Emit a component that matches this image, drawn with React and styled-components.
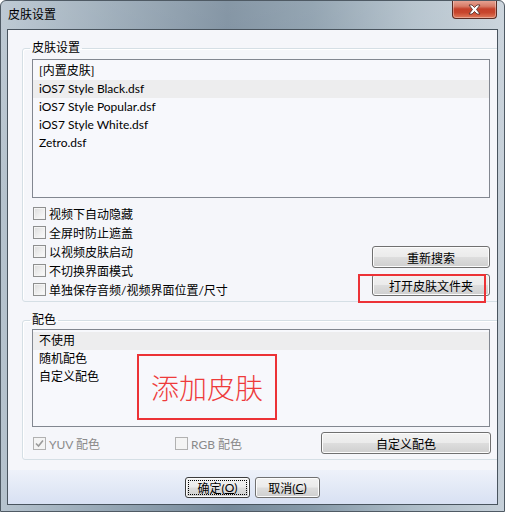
import React from 'react';
import styled, { createGlobalStyle } from 'styled-components';

const GlobalStyle = createGlobalStyle`
  html, body {
    margin: 0;
    padding: 0;
  }
  body {
    font-family: "Lato", "Noto Sans CJK SC", sans-serif;
    font-size: 12px;
    color: #000;
  }
`;

const Window = styled.div`
  width: 505px;
  height: 512px;
  box-sizing: border-box;
  display: flex;
  flex-direction: column;
  padding: 0 6px 6px 6px;
  border: 1px solid #4f5a64;
  border-radius: 6px 6px 0 0;
  overflow: hidden;
  background:
    linear-gradient(180deg, rgba(255, 255, 255, 0.12) 0%, rgba(255, 255, 255, 0) 40%),
    linear-gradient(90deg, #b6c3ce 0%, #95a6b4 22%, #76899a 45%, #879aa9 62%, #aebdc8 82%, #c6d0d9 100%);
`;

const TitleBar = styled.div`
  height: 28px;
  display: flex;
  justify-content: space-between;
  align-items: flex-start;
  padding-left: 1px;
`;

const Title = styled.div`
  margin-top: 6px;
  font-size: 12px;
  line-height: 16px;
`;

const CloseButton = styled.div`
  width: 45px;
  height: 19px;
  margin-top: -1px;
  margin-right: 1px;
  box-sizing: border-box;
  border: 1px solid #5a2c24;
  border-top: none;
  border-radius: 0 0 4px 4px;
  display: flex;
  align-items: center;
  justify-content: center;
  background: linear-gradient(180deg, #e9a899 0%, #d77b67 35%, #c4402a 50%, #c8462d 70%, #e07a5b 100%);
  box-shadow: inset 0 0 0 1px rgba(255, 255, 255, 0.35);
`;

const Client = styled.div`
  flex: 1;
  display: flex;
  flex-direction: column;
  border: 1px solid #49545e;
  background: #f5f6fa;
  overflow: hidden;
`;

const Content = styled.div`
  flex: 1;
  display: flex;
  flex-direction: column;
  padding: 10px 0 0 14px;
`;

const Group = styled.fieldset`
  margin: ${p => p.$top || 0}px -8px 0 0;
  padding: ${p => p.$padTop || 3}px 0 ${p => p.$padBottom || 2}px 9px;
  border: 1px solid #d5dfe5;
  border-radius: 3px;
  box-shadow: inset 1px 1px 0 #ffffff;
  min-width: 0;
`;

const Legend = styled.legend`
  padding: 0 2px;
  margin-left: -2px;
  line-height: 16px;
`;

const ListBox = styled.div`
  width: 458px;
  height: ${p => p.$height}px;
  box-sizing: border-box;
  border: 1px solid #828790;
  background: #f7f8fc;
  padding-top: 2px;
`;

const ListItem = styled.div`
  height: 18px;
  line-height: 18px;
  padding-left: 6px;
  background: ${p => (p.$hover ? '#ededee' : 'transparent')};
  white-space: nowrap;
`;

const OptionsRow = styled.div`
  display: flex;
  justify-content: space-between;
  width: 458px;
  margin-top: 6px;
`;

const CheckColumn = styled.div`
  display: flex;
  flex-direction: column;
`;

const CheckRow = styled.label`
  display: flex;
  align-items: center;
  height: 19px;
  width: ${p => (p.$width ? `${p.$width}px` : 'auto')};
  flex-shrink: 0;
  padding-left: 1px;
  box-sizing: border-box;
  color: ${p => (p.$disabled ? '#8a8a8a' : '#000')};
  white-space: nowrap;
`;

const Box = styled.span`
  width: 13px;
  height: 13px;
  box-sizing: border-box;
  margin-right: 3px;
  border: 1px solid ${p => (p.$disabled ? '#b1b1b1' : '#8e8f8f')};
  background: ${p =>
    p.$disabled
      ? '#f4f4f4'
      : 'linear-gradient(135deg, #dcdcdc 0%, #f0f0f0 60%, #fbfbfb 100%)'};
  box-shadow: inset 0 0 0 1px #f4f4f4;
  display: flex;
  align-items: center;
  justify-content: center;
`;

const ButtonColumn = styled.div`
  display: flex;
  flex-direction: column;
  justify-content: flex-end;
  gap: 6px;
  padding-bottom: 3px;
`;

const Button = styled.div`
  position: relative;
  width: ${p => p.$width}px;
  height: ${p => p.$height || 22}px;
  box-sizing: border-box;
  border: 1px solid ${p => (p.$focus ? '#3c3c3c' : '#707070')};
  border-radius: 3px;
  display: flex;
  align-items: center;
  justify-content: center;
  background: linear-gradient(180deg, #f2f2f2 0%, #ebebeb 48%, #dddddd 52%, #cfcfcf 100%);
  box-shadow: inset 0 0 0 1px #fcfcfc;
  white-space: nowrap;

  ${p =>
    p.$focus &&
    `
    &::after {
      content: '';
      position: absolute;
      inset: 2px;
      border: 1px dotted #000;
    }
  `}
`;

const Highlight = styled.div`
  position: absolute;
  left: -15px;
  top: -1px;
  width: 128px;
  height: 29px;
  box-sizing: border-box;
  border: 2px solid #ec3236;
  pointer-events: none;
`;

const ListWrap = styled.div`
  position: relative;
`;

const Note = styled.div`
  position: absolute;
  left: 105px;
  top: 25px;
  width: 140px;
  height: 66px;
  box-sizing: border-box;
  border: 2px solid #ec3236;
  display: flex;
  align-items: center;
  justify-content: center;
  color: #ee3b3b;
  font-size: 28px;
  font-weight: 300;
  font-family: "Noto Sans CJK SC", sans-serif;
`;

const BottomRow = styled.div`
  display: flex;
  align-items: center;
  width: 459px;
  margin-top: 5px;
`;

const Footer = styled.div`
  height: 34px;
  margin-top: 8px;
  display: flex;
  justify-content: center;
  align-items: flex-start;
  gap: 5px;
  padding-top: 7px;
  box-sizing: border-box;
  background: linear-gradient(180deg, #eef2fa 0%, #e3e9f6 50%, #d8e1f3 100%);
`;

const U = styled.span`
  text-decoration: underline;
`;

const Check = ({ checked, disabled, width, children }) => (
  <CheckRow $disabled={disabled} $width={width}>
    <Box $disabled={disabled}>
      {checked && (
        <svg width="9" height="9" viewBox="0 0 9 9">
          <path d="M1 4.5 L3.5 7 L8 1.5" fill="none" stroke="#9a9a9a" strokeWidth="1.6" />
        </svg>
      )}
    </Box>
    {children}
  </CheckRow>
);

const skins = ['[内置皮肤]', 'iOS7 Style Black.dsf', 'iOS7 Style Popular.dsf', 'iOS7 Style White.dsf', 'Zetro.dsf'];
const options = ['视频下自动隐藏', '全屏时防止遮盖', '以视频皮肤启动', '不切换界面模式', '单独保存音频/视频界面位置/尺寸'];
const colors = ['不使用', '随机配色', '自定义配色'];

export default function App() {
  return (
    <>
      <GlobalStyle />
      <Window>
        <TitleBar>
          <Title>皮肤设置</Title>
          <CloseButton>
            <svg width="15" height="11" viewBox="0 0 15 11">
              <path
                d="M2 1 L5 1 L7.5 3.5 L10 1 L13 1 L9.5 5.5 L13 10 L10 10 L7.5 7.5 L5 10 L2 10 L5.5 5.5 Z"
                fill="#ffffff"
                stroke="#4a2a26"
                strokeWidth="0.8"
              />
            </svg>
          </CloseButton>
        </TitleBar>
        <Client>
          <Content>
            <Group>
              <Legend>皮肤设置</Legend>
              <ListBox $height={139}>
                {skins.map((s, i) => (
                  <ListItem key={s} $hover={i === 1}>{s}</ListItem>
                ))}
              </ListBox>
              <OptionsRow>
                <CheckColumn>
                  {options.map(o => (
                    <Check key={o}>{o}</Check>
                  ))}
                </CheckColumn>
                <ButtonColumn>
                  <Button $width={118}>重新搜索</Button>
                  <Button $width={118}>
                    打开皮肤文件夹
                    <Highlight />
                  </Button>
                </ButtonColumn>
              </OptionsRow>
            </Group>
            <Group $top={10} $padTop={1} $padBottom={5}>
              <Legend>配色</Legend>
              <ListWrap>
                <ListBox $height={98}>
                  {colors.map((c, i) => (
                    <ListItem key={c} $hover={i === 0}>{c}</ListItem>
                  ))}
                </ListBox>
                <Note>添加皮肤</Note>
              </ListWrap>
              <BottomRow>
                <Check checked disabled width={142}>YUV 配色</Check>
                <Check disabled width={147}>RGB 配色</Check>
                <Button $width={170}>自定义配色</Button>
              </BottomRow>
            </Group>
          </Content>
          <Footer>
            <Button $width={65} $height={21} $focus>
              确定(<U>O</U>)
            </Button>
            <Button $width={65} $height={21}>
              取消(<U>C</U>)
            </Button>
          </Footer>
        </Client>
      </Window>
    </>
  );
}
